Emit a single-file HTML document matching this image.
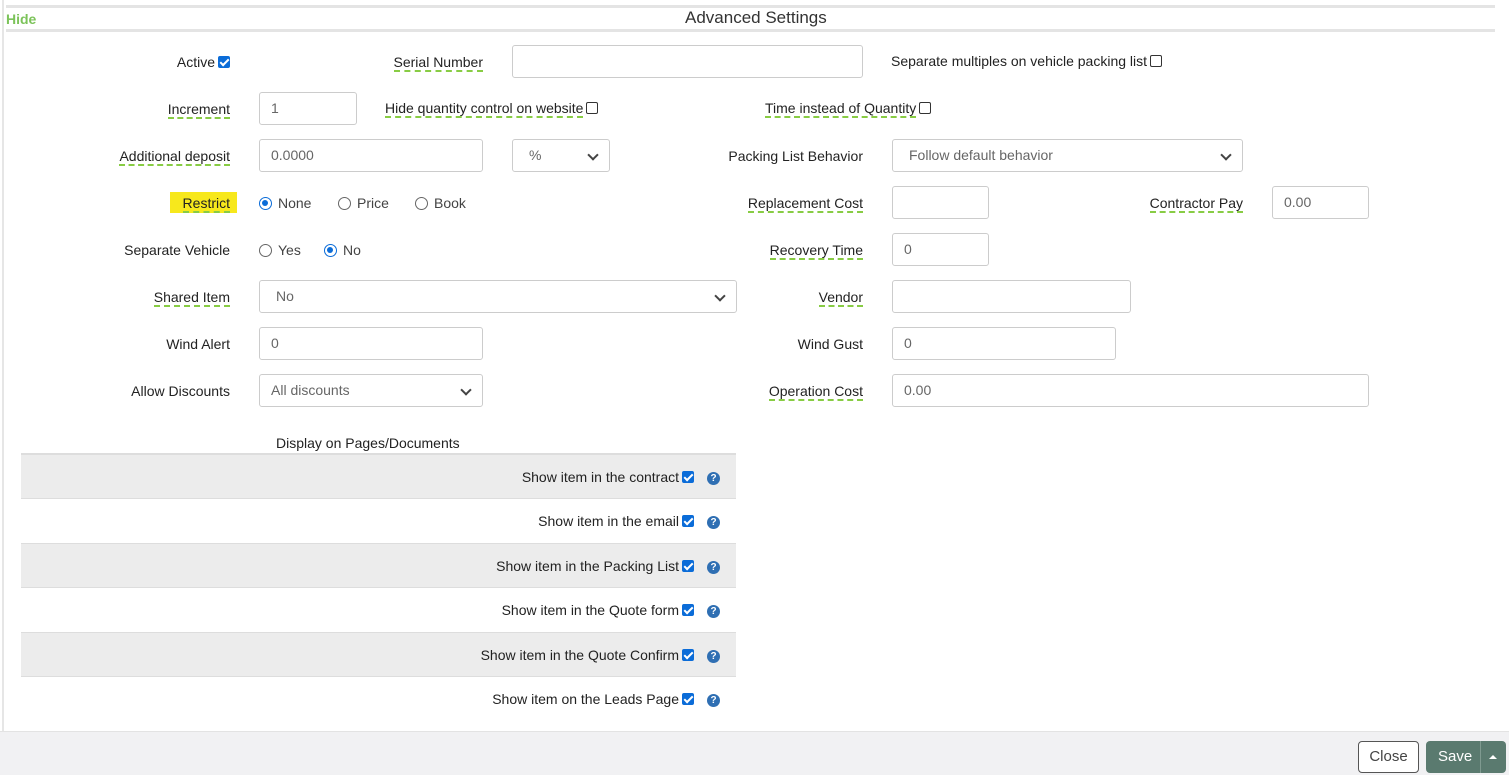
<!DOCTYPE html>
<html><head><style>
*{box-sizing:border-box;margin:0;padding:0}
body{width:1509px;height:775px;position:relative;background:#fff;font-family:"Liberation Sans",Arial,sans-serif;font-size:14px;color:#222;overflow:hidden}
.a{position:absolute;white-space:nowrap}
.l{position:absolute;text-align:right;white-space:nowrap;line-height:20px}
.u{border-bottom:2px dashed #8c4;padding-bottom:0}
.in{position:absolute;border:1px solid #ccc;border-radius:3px;background:#fff;height:33px;padding:0 11px;line-height:31px;color:#666;font-size:14px}
.sel::after{content:"";position:absolute;right:12px;top:11px;width:6px;height:6px;border-right:2px solid #444;border-bottom:2px solid #444;transform:rotate(45deg)}
.cb{display:inline-block;width:12px;height:12px;border:1px solid #333;border-radius:2px;vertical-align:-1px;margin-left:3px;background:#fff}
.cb.on{background:#0b6cd8;border-color:#0b6cd8;position:relative}
.cb.on::after{content:"";position:absolute;left:3px;top:0px;width:3px;height:7px;border-right:2px solid #fff;border-bottom:2px solid #fff;transform:rotate(45deg)}
.rd{display:inline-block;width:13px;height:13px;border:1px solid #666;border-radius:50%;vertical-align:-2px;margin-right:6px;position:relative}
.rd.on{border:1.5px solid #0b6cd8}
.rd.on::after{content:"";position:absolute;left:2px;top:2px;width:6px;height:6px;border-radius:50%;background:#0b6cd8}
.row{position:absolute;left:21px;width:715px;height:45px;border-top:1px solid #ddd}
.row.g{background:#ececec}
.row span{position:absolute;right:42px;top:14px}
.q{position:absolute;right:16px;top:17px;width:13px;height:13px;border-radius:50%;background:#2f6fb3;color:#fff;font-size:10px;font-weight:bold;text-align:center;line-height:13px}
</style></head><body>
<div class="a" style="left:2px;top:0;width:2px;height:731px;background:#e6e6e6"></div>
<div class="a" style="left:6px;top:5px;width:1489px;height:3px;background:#e4e4e4"></div>
<div class="a" style="left:6px;top:29px;width:1489px;height:3px;background:#e4e4e4"></div>
<div class="a" style="left:6px;top:11px;color:#7cc35a;font-weight:bold;font-size:14px">Hide</div>
<div class="a" style="left:685px;top:8px;font-size:17px;color:#333">Advanced Settings</div>

<div class="l" style="right:1279px;top:52px">Active<span class="cb on"></span></div>
<div class="l" style="right:1026px;top:52px"><span class="u">Serial Number</span></div>
<div class="in" style="left:512px;top:45px;width:351px"></div>
<div class="a" style="left:891px;top:53px">Separate multiples on vehicle packing list<span class="cb"></span></div>

<div class="l" style="right:1279px;top:99px"><span class="u">Increment</span></div>
<div class="in" style="left:259px;top:92px;width:98px">1</div>
<div class="a" style="left:385px;top:100px"><span class="u">Hide quantity control on website</span><span class="cb"></span></div>
<div class="a" style="left:765px;top:100px"><span class="u">Time instead of Quantity</span><span class="cb"></span></div>

<div class="l" style="right:1279px;top:146px"><span class="u">Additional deposit</span></div>
<div class="in" style="left:259px;top:139px;width:224px">0.0000</div>
<div class="in sel" style="left:512px;top:139px;width:98px;padding-left:16px">%</div>
<div class="l" style="right:646px;top:146px">Packing List Behavior</div>
<div class="in sel" style="left:892px;top:139px;width:351px;padding-left:16px">Follow default behavior</div>

<div class="a" style="left:170px;top:192px;width:67px;height:21px;background:#f7e81c"></div>
<div class="l" style="right:1279px;top:193px"><span class="u">Restrict</span></div>
<div class="a" style="left:259px;top:193px;line-height:20px;color:#444"><span class="rd on"></span>None</div>
<div class="a" style="left:338px;top:193px;line-height:20px;color:#444"><span class="rd"></span>Price</div>
<div class="a" style="left:415px;top:193px;line-height:20px;color:#444"><span class="rd"></span>Book</div>
<div class="l" style="right:646px;top:193px"><span class="u">Replacement Cost</span></div>
<div class="in" style="left:892px;top:186px;width:97px"></div>
<div class="l" style="right:266px;top:193px"><span class="u">Contractor Pay</span></div>
<div class="in" style="left:1272px;top:186px;width:97px">0.00</div>

<div class="l" style="right:1279px;top:240px">Separate Vehicle</div>
<div class="a" style="left:259px;top:240px;line-height:20px;color:#444"><span class="rd"></span>Yes</div>
<div class="a" style="left:324px;top:240px;line-height:20px;color:#444"><span class="rd on"></span>No</div>
<div class="l" style="right:646px;top:240px"><span class="u">Recovery Time</span></div>
<div class="in" style="left:892px;top:233px;width:97px">0</div>

<div class="l" style="right:1279px;top:287px"><span class="u">Shared Item</span></div>
<div class="in sel" style="left:259px;top:280px;width:478px;padding-left:16px">No</div>
<div class="l" style="right:646px;top:287px"><span class="u">Vendor</span></div>
<div class="in" style="left:892px;top:280px;width:239px"></div>

<div class="l" style="right:1279px;top:334px">Wind Alert</div>
<div class="in" style="left:259px;top:327px;width:224px">0</div>
<div class="l" style="right:646px;top:334px">Wind Gust</div>
<div class="in" style="left:892px;top:327px;width:224px">0</div>

<div class="l" style="right:1279px;top:381px">Allow Discounts</div>
<div class="in sel" style="left:259px;top:374px;width:224px">All discounts</div>
<div class="l" style="right:646px;top:381px"><span class="u">Operation Cost</span></div>
<div class="in" style="left:892px;top:374px;width:477px">0.00</div>

<div class="a" style="left:276px;top:435px">Display on Pages/Documents</div>
<div class="row g" style="top:453px;border-top:2px solid #ddd"><span>Show item in the contract<i class="cb on"></i></span><b class="q">?</b></div>
<div class="row" style="top:498px"><span>Show item in the email<i class="cb on"></i></span><b class="q">?</b></div>
<div class="row g" style="top:543px"><span>Show item in the Packing List<i class="cb on"></i></span><b class="q">?</b></div>
<div class="row" style="top:587px"><span>Show item in the Quote form<i class="cb on"></i></span><b class="q">?</b></div>
<div class="row g" style="top:632px"><span>Show item in the Quote Confirm<i class="cb on"></i></span><b class="q">?</b></div>
<div class="row" style="top:676px"><span>Show item on the Leads Page<i class="cb on"></i></span><b class="q">?</b></div>

<div class="a" style="left:0;top:731px;width:1509px;height:44px;background:#f1f1f3;border-top:1px solid #e3e3e3"></div>
<div class="a" style="left:1358px;top:741px;width:61px;height:32px;border:1px solid #555;border-radius:4px;background:#fff;text-align:center;line-height:30px;color:#444;font-size:15px">Close</div>
<div class="a" style="left:1426px;top:741px;width:80px;height:32px;border-radius:4px;background:#5a7a6f;color:#fff;font-size:15px;line-height:32px;padding-left:12px">Save</div>
<div class="a" style="left:1480px;top:741px;width:1px;height:32px;background:#7f9a90"></div>
<div class="a" style="left:1489px;top:755px;width:0;height:0;border-left:4px solid transparent;border-right:4px solid transparent;border-bottom:4px solid #fff"></div>
</body></html>
